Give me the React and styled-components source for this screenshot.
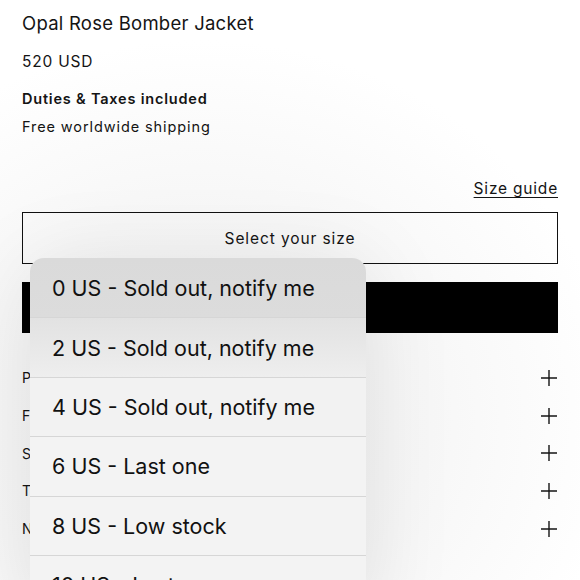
import React from 'react';
import styled, { createGlobalStyle } from 'styled-components';

const GlobalStyle = createGlobalStyle`
  html, body {
    margin: 0;
    padding: 0;
    height: 100%;
    overflow: hidden;
    background: #fff;
  }
  body {
    font-family: Inter, "Liberation Sans", sans-serif;
    color: #141414;
  }
`;

const Page = styled.div`
  position: relative;
  width: 580px;
  height: 580px;
  overflow: hidden;
  background: radial-gradient(ellipse 420px 380px at 200px 420px, #f1f1f1 0%, #f7f7f7 55%, #fff 100%);
`;

const Content = styled.div`
  padding: 11px 22px 0 22px;
  display: flex;
  flex-direction: column;
`;

const Title = styled.h1`
  margin: 0;
  font-size: 18.5px;
  font-weight: 400;
  line-height: 24px;
  letter-spacing: 0.25px;
`;

const Price = styled.div`
  margin-top: 17px;
  font-size: 15.5px;
  line-height: 20px;
  letter-spacing: 0.8px;
`;

const Duties = styled.div`
  margin-top: 17px;
  font-size: 14.5px;
  font-weight: 600;
  line-height: 20px;
  letter-spacing: 0.8px;
`;

const Shipping = styled.div`
  margin-top: 8px;
  font-size: 14.5px;
  line-height: 20px;
  letter-spacing: 0.9px;
`;

const SizeGuide = styled.a`
  align-self: flex-end;
  margin-top: 42px;
  font-size: 15.5px;
  line-height: 20px;
  letter-spacing: 0.8px;
  color: #141414;
  text-decoration: underline;
  text-underline-offset: 3px;
`;

const SelectBox = styled.div`
  margin-top: 13px;
  height: 50px;
  border: 1.5px solid #111;
  display: flex;
  align-items: center;
  justify-content: center;
  font-size: 15.5px;
  letter-spacing: 0.9px;
`;

const AddButton = styled.div`
  margin-top: 18px;
  height: 51px;
  background: #000;
`;

const Accordion = styled.div`
  margin-top: 26px;
  display: flex;
  flex-direction: column;
`;

const AccRow = styled.div`
  height: 37.7px;
  display: flex;
  align-items: center;
  justify-content: space-between;
  font-size: 14px;
  letter-spacing: 0.6px;
`;

const Plus = () => (
  <svg width="18" height="18" viewBox="0 0 18 18">
    <path d="M9 1v16M1 9h16" stroke="#141414" strokeWidth="1.4" fill="none" />
  </svg>
);

const Dropdown = styled.div`
  position: absolute;
  left: 30px;
  top: 258px;
  width: 336px;
  border-radius: 14px;
  overflow: hidden;
  background: #f3f3f3;
  box-shadow: 0 10px 90px rgba(0, 0, 0, 0.1);
`;

const Option = styled.div`
  height: 59.4px;
  box-sizing: border-box;
  display: flex;
  align-items: center;
  padding-left: 22px;
  font-size: 21.5px;
  color: #111;
  border-top: ${p => (p.first ? 'none' : '1px solid #d6d6d6')};
  background: ${p => p.bg};
`;

const options = [
  { label: '0 US - Sold out, notify me', bg: 'linear-gradient(#dadada, #dcdcdc)' },
  { label: '2 US - Sold out, notify me', bg: 'linear-gradient(#e2e2e2, #eeeeee)' },
  { label: '4 US - Sold out, notify me', bg: '#f2f2f2' },
  { label: '6 US - Last one', bg: '#f3f3f3' },
  { label: '8 US - Low stock', bg: '#f3f3f3' },
  { label: '10 US - Last one', bg: '#f3f3f3' },
];

const sections = ['Product details', 'Fabric & care', 'Shipping & returns', 'The fit', 'Need help?'];

const App = () => (
  <Page>
    <GlobalStyle />
    <Content>
      <Title>Opal Rose Bomber Jacket</Title>
      <Price>520 USD</Price>
      <Duties>Duties &amp; Taxes included</Duties>
      <Shipping>Free worldwide shipping</Shipping>
      <SizeGuide>Size guide</SizeGuide>
      <SelectBox>Select your size</SelectBox>
      <AddButton />
      <Accordion>
        {sections.map(s => (
          <AccRow key={s}>
            <span>{s}</span>
            <Plus />
          </AccRow>
        ))}
      </Accordion>
    </Content>
    <Dropdown>
      {options.map((o, i) => (
        <Option key={o.label} first={i === 0} bg={o.bg}>
          {o.label}
        </Option>
      ))}
    </Dropdown>
  </Page>
);

export default App;
